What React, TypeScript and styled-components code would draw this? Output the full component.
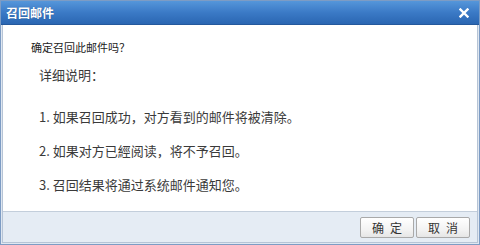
import styled, { createGlobalStyle } from "styled-components";

const GlobalStyle = createGlobalStyle`
  html, body {
    margin: 0;
    padding: 0;
    background: #ffffff;
  }
  * {
    box-sizing: border-box;
  }
`;

const Window = styled.div`
  width: 480px;
  height: 245px;
  display: flex;
  flex-direction: column;
  font-family: "Noto Sans CJK SC", "Liberation Sans", sans-serif;
  background: #dfe7f1;
  border: 1px solid #7d9cc4;
`;

const TitleBar = styled.div`
  height: 24px;
  flex: none;
  display: flex;
  align-items: center;
  justify-content: space-between;
  padding: 0 8px 0 5px;
  background: linear-gradient(to bottom, #5596da 0%, #3b7ac6 50%, #2a66b2 100%);
  border-bottom: 1px solid #24589c;
`;

const Title = styled.div`
  color: #ffffff;
  font-size: 12px;
  font-weight: bold;
  text-shadow: 0 0 1px rgba(0, 0, 0, 0.3);
`;

const CloseButton = styled.button`
  width: 14px;
  height: 14px;
  padding: 0;
  border: none;
  background: transparent;
  display: flex;
  align-items: center;
  justify-content: center;
  cursor: pointer;
`;

const Frame = styled.div`
  flex: 1;
  display: flex;
  flex-direction: column;
  margin: 0 1px 1px 1px;
  border: 1px solid #b6c4d6;
  border-top: none;
`;

const Body = styled.div`
  flex: 1;
  background: #ffffff;
  padding: 15px 0 0 28px;
`;

const Question = styled.div`
  font-size: 11px;
  line-height: 14px;
  color: #222222;
`;

const Details = styled.div`
  margin-top: 12px;
  padding-left: 8px;
  display: flex;
  flex-direction: column;
`;

const Heading = styled.div`
  font-size: 13px;
  line-height: 18px;
  color: #3a3a3a;
  margin-bottom: 8px;
`;

const Item = styled.div`
  font-size: 13px;
  line-height: 18px;
  color: #3a3a3a;
  margin-top: 16px;
`;

const Footer = styled.div`
  height: 31px;
  flex: none;
  display: flex;
  align-items: center;
  justify-content: flex-end;
  gap: 2px;
  padding-right: 7px;
  background: #e5ecf4;
  border-top: 1px solid #c3cedb;
`;

const Button = styled.button`
  width: 54px;
  height: 21px;
  padding: 0;
  font-family: "Noto Sans CJK SC", "Liberation Sans", sans-serif;
  font-size: 12px;
  color: #333333;
  letter-spacing: 6px;
  text-indent: 6px;
  background: linear-gradient(to bottom, #ffffff 0%, #f3f3f3 60%, #e6e6e6 100%);
  border: 1px solid #a9a9a9;
  border-radius: 2px;
  cursor: pointer;
`;

export default function App() {
  return (
    <>
      <GlobalStyle />
      <Window>
        <TitleBar>
          <Title>召回邮件</Title>
          <CloseButton aria-label="关闭">
            <svg width="10" height="10" viewBox="0 0 10 10">
              <path d="M1.5 1.5 L8.5 8.5 M8.5 1.5 L1.5 8.5" stroke="#ffffff" strokeWidth="2.4" strokeLinecap="square" />
            </svg>
          </CloseButton>
        </TitleBar>
        <Frame>
          <Body>
            <Question>确定召回此邮件吗？</Question>
            <Details>
              <Heading>详细说明：</Heading>
              <Item>1. 如果召回成功，对方看到的邮件将被清除。</Item>
              <Item>2. 如果对方已經阅读，将不予召回。</Item>
              <Item>3. 召回结果将通过系统邮件通知您。</Item>
            </Details>
          </Body>
          <Footer>
            <Button>确定</Button>
            <Button>取消</Button>
          </Footer>
        </Frame>
      </Window>
    </>
  );
}
